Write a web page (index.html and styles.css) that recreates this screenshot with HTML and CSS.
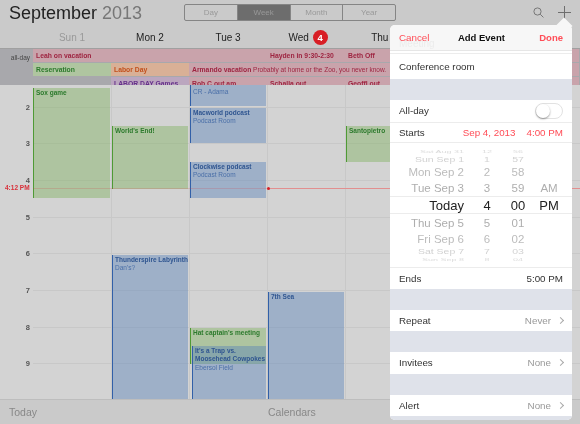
FILE: index.html
```html
<!DOCTYPE html>
<html lang="en">
<head>
  <meta charset="UTF-8" />
  <meta name="viewport" content="width=device-width, initial-scale=1.0" />
  <title>Calendar</title>
  <link rel="stylesheet" href="styles.css">
</head>

<body>
  <div class="page">
    <header class="topbar">
      <h1 class="month">September <span class="year">2013</span></h1>
      <nav class="views">
        <span class="view">Day</span>
        <span class="view active">Week</span>
        <span class="view">Month</span>
        <span class="view">Year</span>
      </nav>
      <div class="actions">
        <svg class="icon-search" width="11" height="11" viewBox="0 0 11 11">
          <circle cx="4.5" cy="4.5" r="3.6" />
          <path d="M7.2 7.2 10.4 10.4" />
        </svg>
        <svg class="icon-plus" width="13" height="13" viewBox="0 0 13 13">
          <path d="M6.5 0V13M0 6.5H13" />
        </svg>
      </div>
    </header>

    <div class="days">
      <div class="day-name past">Sun 1</div>
      <div class="day-name">Mon 2</div>
      <div class="day-name">Tue 3</div>
      <div class="day-name today">Wed <span class="badge">4</span></div>
      <div class="day-name">Thu 5</div>
    </div>

    <div class="allday">
      <div class="allday-label">all-day</div>
      <div class="chip pink span-3"><b>Leah on vacation</b></div>
      <div class="chip pink"><b>Hayden in 9:30-2:30</b></div>
      <div class="chip pink span-3"><b>Beth Off</b></div>
      <div class="chip green start"><b>Reservation</b></div>
      <div class="chip orange"><b>Labor Day</b></div>
      <div class="chip pink span-5"><b>Armando vacation</b> Probably at home or the Zoo, you never know.</div>
      <div class="chip purple second"><b>LABOR DAY Games</b></div>
      <div class="chip pink"><b>Rob C out am</b></div>
      <div class="chip pink"><b>Schalla out</b></div>
      <div class="chip pink span-3"><b>Geoffl out</b></div>
    </div>

    <div class="schedule">
      <div class="hours">
        <div class="hour"><span>2</span></div>
        <div class="hour"><span>3</span></div>
        <div class="hour"><span>4</span></div>
        <div class="hour"><span>5</span></div>
        <div class="hour"><span>6</span></div>
        <div class="hour"><span>7</span></div>
        <div class="hour"><span>8</span></div>
        <div class="hour"><span>9</span></div>
      </div>

      <div class="columns">
        <div class="column">
          <div class="event green ev-sox"><b>Sox game</b></div>
        </div>
        <div class="column">
          <div class="event green ev-world"><b>World's End!</b></div>
          <div class="event blue ev-thunder"><b>Thunderspire Labyrinth</b><br>Dan's?</div>
        </div>
        <div class="column">
          <div class="event blue ev-cr">CR - Adama</div>
          <div class="event blue ev-macworld"><b>Macworld podcast</b><br>Podcast Room</div>
          <div class="event blue ev-clockwise"><b>Clockwise podcast</b><br>Podcast Room</div>
          <div class="event green ev-hat"><b>Hat captain's meeting</b></div>
          <div class="event blue ev-trap"><b>It's a Trap vs.<br>Moosehead Cowpokes</b><br>Ebersol Field</div>
        </div>
        <div class="column">
          <div class="event blue ev-sea"><b>7th Sea</b></div>
        </div>
        <div class="column">
          <div class="event green ev-santo"><b>Santopietro</b></div>
        </div>
        <div class="column"></div>
        <div class="column"></div>
      </div>

      <div class="now-label">4:12 PM</div>
      <div class="now-line"></div>
      <div class="now-line current"></div>
    </div>

    <footer class="bottombar">
      <span class="bottom-today">Today</span>
      <span class="bottom-calendars">Calendars</span>
    </footer>

    <aside class="popover">
      <div class="pop-head">
        <span class="ghost">Meeting</span>
        <span class="red">Cancel</span>
        <b class="pop-title">Add Event</b>
        <b class="red">Done</b>
      </div>
      <div class="pop-rule"></div>
      <div class="row tall">Conference room</div>
      <div class="gap"></div>
      <div class="row">All-day<span class="toggle"></span></div>
      <div class="row line">Starts<span class="red when"><span>Sep 4, 2013</span><span>4:00 PM</span></span></div>

      <div class="picker">
        <div class="pick p-edge"><span>Sat Aug 31</span><span>12</span><span>56</span><span></span></div>
        <div class="pick p-far"><span>Sun Sep 1</span><span>1</span><span>57</span><span></span></div>
        <div class="pick p-mid"><span>Mon Sep 2</span><span>2</span><span>58</span><span></span></div>
        <div class="pick p-near"><span>Tue Sep 3</span><span>3</span><span>59</span><span>AM</span></div>
        <div class="pick p-now"><span>Today</span><span>4</span><span>00</span><span>PM</span></div>
        <div class="pick p-near"><span>Thu Sep 5</span><span>5</span><span>01</span><span></span></div>
        <div class="pick p-mid"><span>Fri Sep 6</span><span>6</span><span>02</span><span></span></div>
        <div class="pick p-far"><span>Sat Sep 7</span><span>7</span><span>03</span><span></span></div>
        <div class="pick p-edge"><span>Sun Sep 8</span><span>8</span><span>04</span><span></span></div>
      </div>

      <div class="row line-top">Ends<span>5:00 PM</span></div>
      <div class="gap"></div>
      <div class="row">Repeat<span class="detail">Never<i class="chevron"></i></span></div>
      <div class="gap"></div>
      <div class="row">Invitees<span class="detail">None<i class="chevron"></i></span></div>
      <div class="gap"></div>
      <div class="row">Alert<span class="detail">None<i class="chevron"></i></span></div>
      <div class="gap end"></div>
    </aside>
  </div>
</body>
</html>
```

FILE: styles.css
```css
* {
  box-sizing: border-box;
}

body {
  margin: 0;
  font-family: "Liberation Sans", Arial, sans-serif;
  background-color: #d2d2d2;
}

.page {
  position: relative;
  display: flex;
  flex-direction: column;
  width: 580px;
  height: 424px;
  overflow: hidden;
  background-color: #cacaca;
  filter: blur(0.35px);
}

/* top bar */
.topbar {
  display: flex;
  align-items: flex-start;
  height: 28px;
  padding-left: 9px;
}

.month {
  width: 175px;
  margin: 1px 0 0;
  font-size: 18px;
  line-height: 24px;
  font-weight: normal;
  color: #222;
}

.year {
  color: #777;
}

.views {
  display: flex;
  width: 212px;
  height: 17px;
  margin-top: 4px;
  border: 1px solid #858585;
  border-radius: 2px;
}

.view {
  flex: 1;
  font-size: 8px;
  line-height: 15px;
  text-align: center;
  color: #999;
  border-left: 1px solid #858585;
}

.view:first-child {
  border-left: none;
}

.view.active {
  background-color: #6d6d6d;
  color: #989898;
}

.actions {
  display: flex;
  align-items: center;
  gap: 14px;
  margin: 6px 0 0 137px;
}

.icon-search {
  fill: none;
  stroke: #777;
  stroke-width: 1;
}

.icon-plus {
  fill: none;
  stroke: #6e6e6e;
  stroke-width: 1;
}

/* day names */
.days {
  display: grid;
  grid-template-columns: repeat(7, 78px);
  height: 20px;
  padding-left: 33px;
}

.day-name {
  font-size: 10px;
  line-height: 19px;
  text-align: center;
  color: #222;
}

.day-name.past {
  color: #999;
}

.day-name.today {
  padding-left: 4px;
}

.badge {
  display: inline-block;
  width: 15px;
  height: 15px;
  margin-left: 1px;
  border-radius: 50%;
  background-color: #d81e25;
  color: #fff;
  font-size: 9.5px;
  font-weight: bold;
  line-height: 15px;
  vertical-align: 0;
}

/* all-day area */
.allday {
  display: grid;
  grid-template-columns: 33px repeat(7, 78px);
  grid-auto-rows: 14px;
  height: 37px;
  overflow: hidden;
  background-color: #a8a8ac;
  border-top: 1px solid #a0a0a0;
}

.allday-label {
  padding: 2px 3px 0 0;
  font-size: 6.5px;
  line-height: 14px;
  text-align: right;
  color: #444;
}

.chip {
  margin-bottom: 1px;
  padding-left: 2px;
  overflow: hidden;
  white-space: nowrap;
  font-size: 6.5px;
  line-height: 14px;
  border-left: 1px solid transparent;
}

.chip b {
  font-size: 6.8px;
}

.chip.start {
  grid-column-start: 2;
}

.chip.second {
  grid-column-start: 3;
}

.span-3 {
  grid-column-end: span 3;
}

.span-5 {
  grid-column-end: span 5;
}

.chip.pink {
  background-color: #c9a3ab;
  color: #9e2440;
}

.chip.green {
  background-color: #afc5a0;
  color: #2c7a2c;
}

.chip.orange {
  background-color: #d9b096;
  color: #c2501c;
}

.chip.purple {
  background-color: #bba6bf;
  color: #65308a;
}

/* time grid */
.schedule {
  position: relative;
  flex: 1;
  padding-top: 3.7px;
  overflow: hidden;
  background-color: #d3d3d3;
}

.hour {
  display: flex;
  align-items: center;
  height: 36.7px;
}

.hour span {
  width: 33px;
  padding-right: 3px;
  font-size: 7.5px;
  font-weight: bold;
  text-align: right;
  color: #555;
}

.hour::after {
  content: "";
  flex: 1;
  height: 1px;
  background-color: #c8c8c8;
}

.columns {
  position: absolute;
  top: 0;
  bottom: 0;
  left: 33px;
  display: grid;
  grid-template-columns: repeat(7, 78px);
}

.column {
  position: relative;
  border-left: 1px solid #c8c8c8;
}

.column:first-child {
  border-left: none;
}

.event {
  position: absolute;
  left: 0;
  right: 1px;
  padding: 1px 0 0 2px;
  white-space: nowrap;
  font-size: 6.5px;
  line-height: 8.4px;
  border-left: 1px solid;
}

.event.green {
  background-color: rgba(120, 175, 85, 0.4);
  border-color: #4f9a35;
  color: #2c7a2c;
}

.event.blue {
  background-color: rgba(80, 125, 185, 0.4);
  border-color: #3260a8;
  color: #4a6fa8;
}

.event.blue b {
  color: #2f5590;
}

.ev-sox { top: 3px; height: 110px; }
.ev-world { top: 41px; height: 63px; }
.ev-thunder { top: 170px; height: 144px; }
.ev-cr { top: 0; height: 21px; padding-top: 3px; }
.ev-macworld { top: 23px; height: 35px; }
.ev-clockwise { top: 77px; height: 36px; }
.ev-hat { top: 243px; height: 36px; }
.ev-trap { top: 261px; left: 2px; height: 53px; }
.ev-sea { top: 207px; height: 107px; }
.ev-santo { top: 41px; height: 36px; }

.now-label {
  position: absolute;
  top: 98px;
  left: 5px;
  font-size: 6.5px;
  font-weight: bold;
  line-height: 9px;
  color: #d8303a;
}

.now-line {
  position: absolute;
  top: 103px;
  left: 33px;
  right: 0;
  height: 1px;
  background-color: rgba(216, 48, 58, 0.18);
}

.now-line.current {
  left: 268px;
  background-color: #e28f8f;
}

.now-line.current::before {
  content: "";
  position: absolute;
  top: -1px;
  left: -1px;
  width: 3px;
  height: 3px;
  border-radius: 50%;
  background-color: #d81e25;
}

/* bottom bar */
.bottombar {
  display: flex;
  align-items: center;
  height: 25px;
  padding-left: 9px;
  font-size: 10.5px;
  color: #888;
  border-top: 1px solid #bdbdbd;
}

.bottom-today {
  width: 259px;
}

/* add event popover */
.topbar::after {
  content: "";
  position: absolute;
  top: 20px;
  left: 558px;
  width: 12px;
  height: 12px;
  z-index: 2;
  background-color: #f7f7f7;
  transform: rotate(45deg);
}

.popover {
  position: absolute;
  top: 25px;
  left: 390px;
  z-index: 3;
  display: flex;
  flex-direction: column;
  width: 182px;
  height: 395px;
  border-radius: 5px;
  overflow: hidden;
  background-color: #fff;
  font-size: 9.8px;
  color: #333;
}

.pop-head {
  position: relative;
  display: flex;
  justify-content: space-between;
  align-items: center;
  height: 26px;
  padding: 0 9px;
  background-color: #f7f7f7;
  font-size: 9.8px;
  color: #111;
  border-bottom: 1px solid #e6e6e6;
}

.pop-head b {
  font-size: 9.5px;
}

.ghost {
  position: absolute;
  top: 13px;
  left: 9px;
  font-size: 10px;
  color: #ececec;
}

.pop-head > * {
  z-index: 1;
}

.pop-title {
  margin-right: 6px;
}

.red {
  color: #ff4d57;
}

.pop-rule {
  height: 3px;
  border-bottom: 1px solid #ececec;
}

.row {
  display: flex;
  justify-content: space-between;
  align-items: center;
  flex: none;
  height: 21.5px;
  padding: 0 9px;
  background-color: #fff;
}

.row.tall {
  height: 25px;
}

.line {
  border-top: 1px solid #ececec;
  border-bottom: 1px solid #ececec;
}

.line-top {
  border-top: 1px solid #ececec;
}

.gap {
  flex: none;
  height: 21px;
  background-color: #dfe2ea;
}

.gap.end {
  height: 4px;
}

.toggle {
  position: relative;
  width: 28px;
  height: 16px;
  border: 1px solid #e2e2e2;
  border-radius: 8px;
}

.toggle::after {
  content: "";
  position: absolute;
  top: 0;
  left: 0;
  width: 14px;
  height: 14px;
  border-radius: 50%;
  background-color: #fff;
  box-shadow: 0 1px 2px rgba(0, 0, 0, 0.4);
}

.when {
  display: flex;
  gap: 11px;
}

.detail {
  display: flex;
  align-items: center;
  color: #999;
}

.chevron {
  width: 5px;
  height: 5px;
  margin-left: 7px;
  border-top: 1px solid #aaa;
  border-right: 1px solid #aaa;
  transform: rotate(45deg);
}

/* date picker */
.picker {
  flex: none;
  height: 124px;
  padding-top: 5px;
  overflow: hidden;
  background-color: #fff;
}

.pick {
  display: grid;
  grid-template-columns: 74px 46px 16px 46px;
  align-items: center;
  text-align: center;
  color: #b4b4b4;
}

.pick span:first-child {
  text-align: right;
}

.p-edge {
  height: 6px;
  font-size: 9px;
  color: #dcdcdc;
  transform: scaleY(0.35);
}

.p-far {
  height: 10px;
  font-size: 10.5px;
  color: #d2d2d2;
  transform: scaleY(0.65);
}

.p-mid {
  height: 15px;
  font-size: 11.5px;
  color: #bcbcbc;
  transform: scaleY(0.9);
}

.p-near {
  height: 17px;
  font-size: 11.5px;
  color: #aeaeae;
}

.p-now {
  height: 18px;
  font-size: 13px;
  color: #222;
  border-top: 1px solid #ececec;
  border-bottom: 1px solid #ececec;
}
```
